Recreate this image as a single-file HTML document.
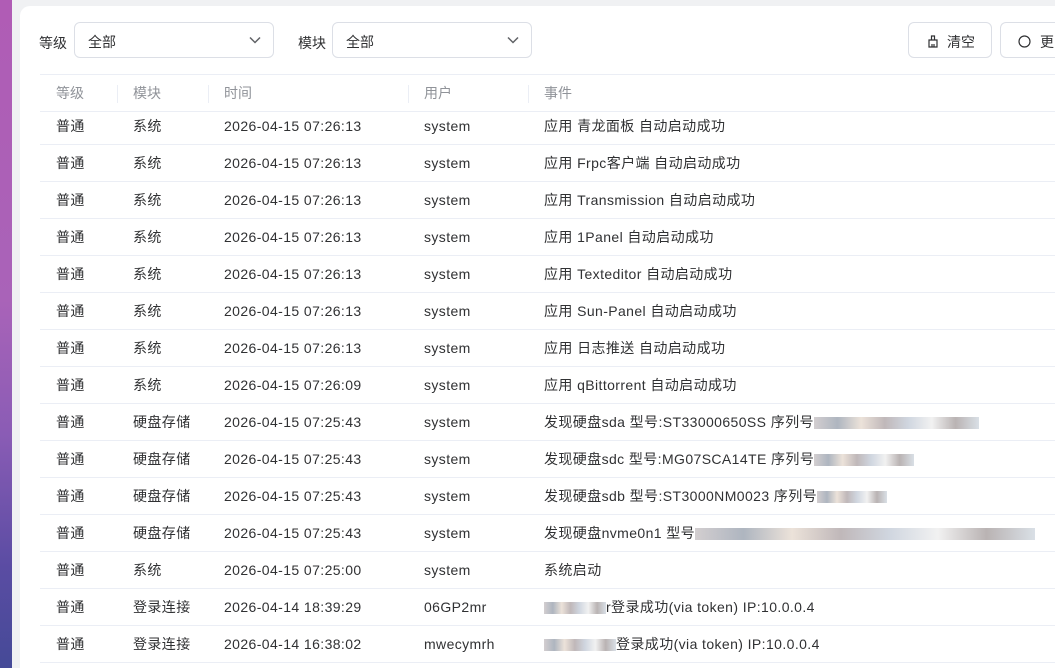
<!DOCTYPE html>
<html><head><meta charset="utf-8"><style>
*{margin:0;padding:0;box-sizing:border-box}
html,body{width:1055px;height:668px;overflow:hidden}
body{background:#f0f1f3;font-family:"Liberation Sans","Noto Sans CJK SC",sans-serif;position:relative}
.strip{position:absolute;left:0;top:0;width:12px;height:668px;background:linear-gradient(180deg,#b05cb5 0%,#a963b8 45%,#8a5cb5 65%,#5a4ca3 85%,#454a97 100%)}
.card{position:absolute;left:20px;top:6px;width:1035px;height:662px;background:#fff;border-radius:10px 0 0 0}
.lbl{position:absolute;top:33px;font-size:14px;color:#303133}
.sel{position:absolute;top:22px;height:36px;border:1px solid #dcdfe6;border-radius:6px;font-size:14px;color:#303133;padding:9px 0 0 13px}
.sel svg{position:absolute;right:12px;top:13px}
.btn{position:absolute;top:22px;height:36px;border:1px solid #dcdfe6;border-radius:6px;font-size:14px;color:#303133;padding:9px 0 0 0;overflow:hidden;white-space:nowrap}
table{position:absolute;left:40px;top:74px;border-collapse:collapse;font-size:14px;color:#303133;width:1015px}
th{height:37px;text-align:left;font-weight:normal;color:#909399;border-top:1px solid #ebeef5;border-bottom:1px solid #ebeef5;padding-left:16px;position:relative}
th+th:before{content:"";position:absolute;left:0;top:10px;height:18px;border-left:1px solid #ebeef5}
td{height:37px;border-bottom:1px solid #ebeef5;padding-left:16px;white-space:nowrap;letter-spacing:0.4px;overflow:hidden}
tr.f td{height:33px;padding-bottom:4px}
.bl{display:inline-block;height:12px;vertical-align:middle;background:linear-gradient(90deg,#c8c2c4,#9aa3b0,#e7dbd0,#b0a6a8,#c4ccd8,#eee,#a8a0a0,#d0d8e0);opacity:.8}
</style></head><body>
<div class="strip"></div>
<div class="card"></div>
<div class="lbl" style="left:39px">等级</div>
<div class="sel" style="left:74px;width:200px">全部<svg width="12" height="8" viewBox="0 0 12 8"><path d="M1 1.5l5 5 5-5" fill="none" stroke="#606266" stroke-width="1.5"/></svg></div>
<div class="lbl" style="left:298px">模块</div>
<div class="sel" style="left:332px;width:200px">全部<svg width="12" height="8" viewBox="0 0 12 8"><path d="M1 1.5l5 5 5-5" fill="none" stroke="#606266" stroke-width="1.5"/></svg></div>
<div class="btn" style="left:908px;width:84px;padding-left:18px"><svg width="12" height="13" viewBox="0 0 12 13" style="vertical-align:-1px;margin-right:8px"><path d="M4.5 1h3v4h-3z M2 5h8v7H2z M5 9v3 M7 9v3" fill="none" stroke="#303133" stroke-width="1.2"/></svg>清空</div>
<div class="btn" style="left:1000px;width:55px;padding-left:17px;border-radius:6px 0 0 6px;border-right:none"><svg width="13" height="13" viewBox="0 0 13 13" style="vertical-align:-1px;margin-right:9px"><circle cx="6.5" cy="6.5" r="5.5" fill="none" stroke="#303133" stroke-width="1.2"/></svg>更多</div>
<table>
<colgroup><col style="width:77px"><col style="width:91px"><col style="width:200px"><col style="width:120px"><col></colgroup>
<tr><th>等级</th><th>模块</th><th>时间</th><th>用户</th><th>事件</th></tr>
<tr class="f"><td>普通</td><td>系统</td><td>2026-04-15 07:26:13</td><td>system</td><td>应用 青龙面板 自动启动成功</td></tr>
<tr><td>普通</td><td>系统</td><td>2026-04-15 07:26:13</td><td>system</td><td>应用 Frpc客户端 自动启动成功</td></tr>
<tr><td>普通</td><td>系统</td><td>2026-04-15 07:26:13</td><td>system</td><td>应用 Transmission 自动启动成功</td></tr>
<tr><td>普通</td><td>系统</td><td>2026-04-15 07:26:13</td><td>system</td><td>应用 1Panel 自动启动成功</td></tr>
<tr><td>普通</td><td>系统</td><td>2026-04-15 07:26:13</td><td>system</td><td>应用 Texteditor 自动启动成功</td></tr>
<tr><td>普通</td><td>系统</td><td>2026-04-15 07:26:13</td><td>system</td><td>应用 Sun-Panel 自动启动成功</td></tr>
<tr><td>普通</td><td>系统</td><td>2026-04-15 07:26:13</td><td>system</td><td>应用 日志推送 自动启动成功</td></tr>
<tr><td>普通</td><td>系统</td><td>2026-04-15 07:26:09</td><td>system</td><td>应用 qBittorrent 自动启动成功</td></tr>
<tr><td>普通</td><td>硬盘存储</td><td>2026-04-15 07:25:43</td><td>system</td><td>发现硬盘sda 型号:ST33000650SS 序列号<span class="bl" style="width:165px"></span></td></tr>
<tr><td>普通</td><td>硬盘存储</td><td>2026-04-15 07:25:43</td><td>system</td><td>发现硬盘sdc 型号:MG07SCA14TE 序列号<span class="bl" style="width:100px"></span></td></tr>
<tr><td>普通</td><td>硬盘存储</td><td>2026-04-15 07:25:43</td><td>system</td><td>发现硬盘sdb 型号:ST3000NM0023 序列号<span class="bl" style="width:70px"></span></td></tr>
<tr><td>普通</td><td>硬盘存储</td><td>2026-04-15 07:25:43</td><td>system</td><td>发现硬盘nvme0n1 型号<span class="bl" style="width:340px"></span></td></tr>
<tr><td>普通</td><td>系统</td><td>2026-04-15 07:25:00</td><td>system</td><td>系统启动</td></tr>
<tr><td>普通</td><td>登录连接</td><td>2026-04-14 18:39:29</td><td>06GP2mr</td><td><span class="bl" style="width:62px"></span>r登录成功(via token) IP:10.0.0.4</td></tr>
<tr><td>普通</td><td>登录连接</td><td>2026-04-14 16:38:02</td><td>mwecymrh</td><td><span class="bl" style="width:72px"></span>登录成功(via token) IP:10.0.0.4</td></tr>
</table>
</body></html>
